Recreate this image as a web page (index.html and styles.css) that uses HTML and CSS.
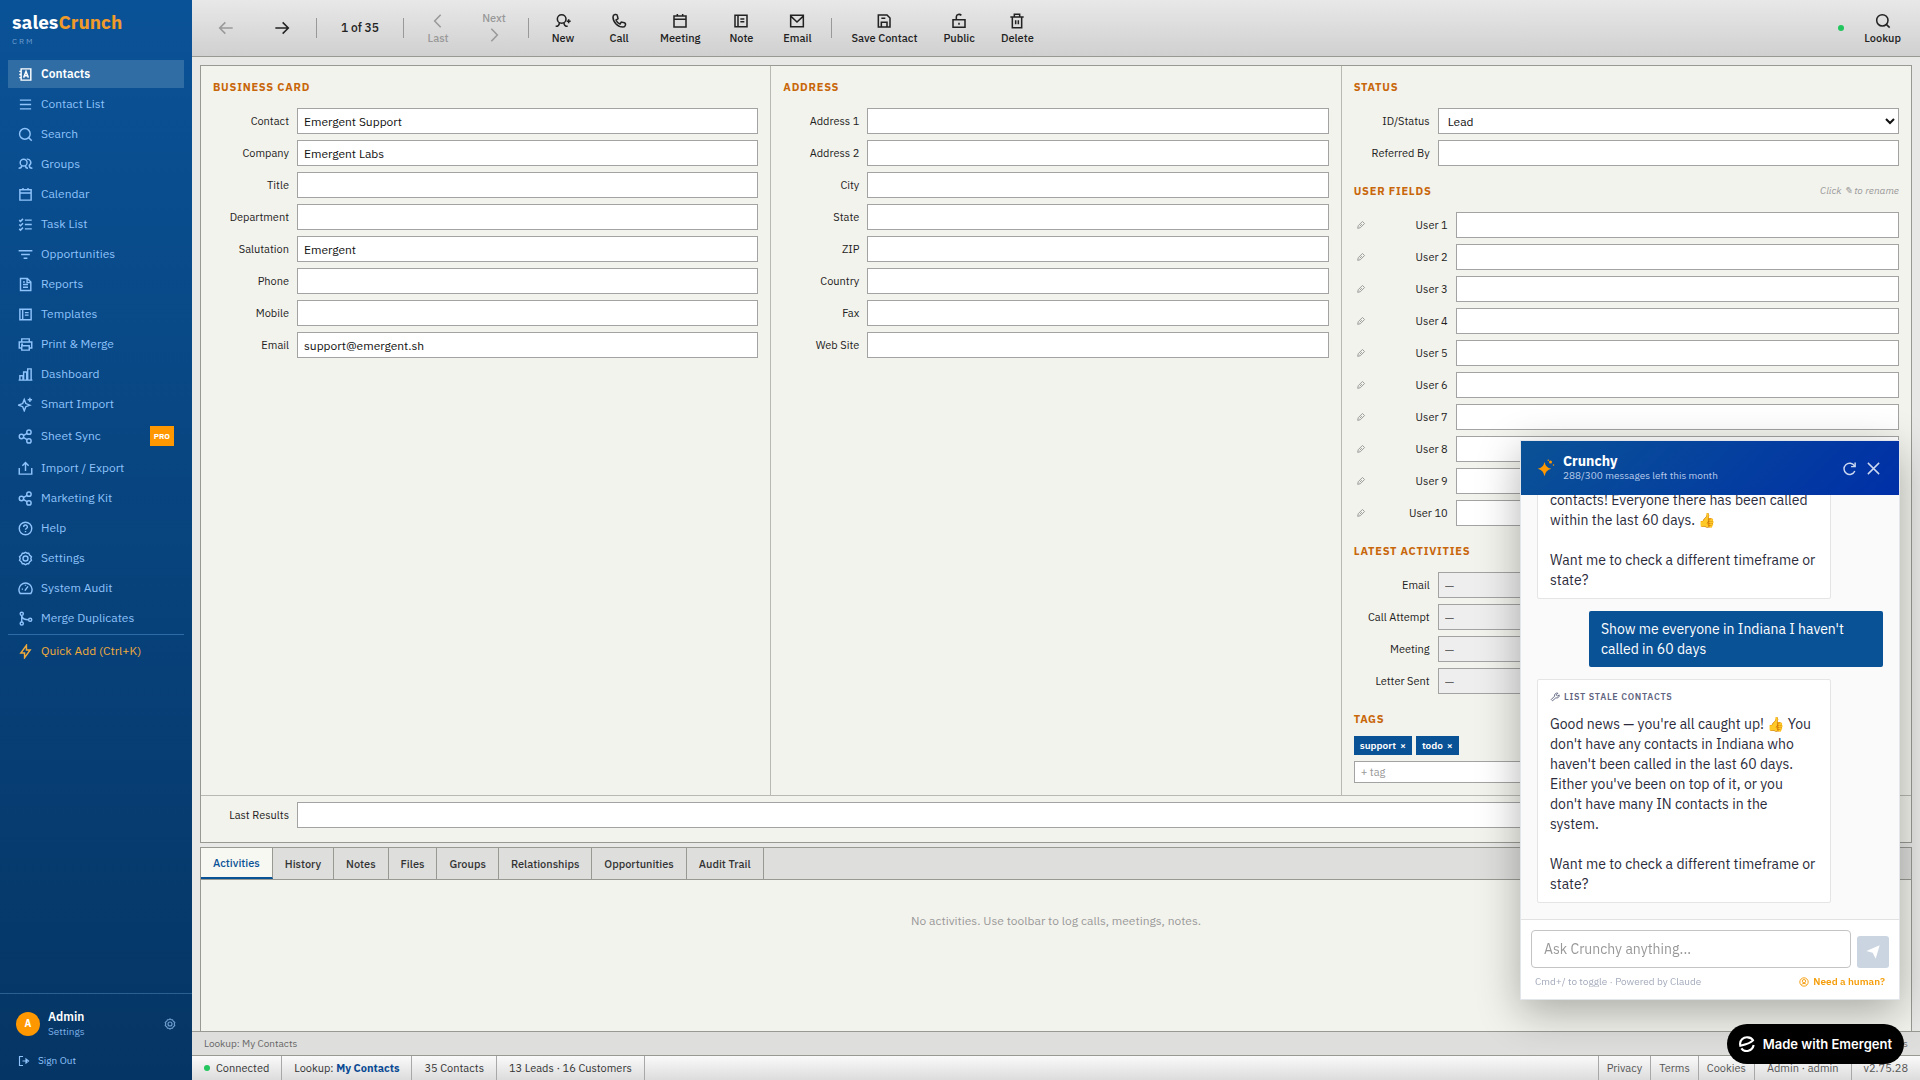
FILE: index.html
```html
<!DOCTYPE html>
<html lang="en">
<head>
<meta charset="utf-8">
<meta name="viewport" content="width=device-width, initial-scale=1">
<title>salesCrunch CRM</title>
<link rel="stylesheet" href="styles.css">
</head>
<body>
<svg class="sprite" aria-hidden="true">
  <symbol id="i-contacts" viewBox="0 0 24 24"><path d="M5 3h15.500v18H5zM2 7h4M2 12h4M2 17h4"/><path d="M9 17l3.800-10 3.800 10M10.500 14h4.600"/></symbol>
  <symbol id="i-menu" viewBox="0 0 24 24"><path d="M3 5h18M3 12h18M3 19h18"/></symbol>
  <symbol id="i-search" viewBox="0 0 24 24"><circle cx="11" cy="11" r="8.500"/><path d="M17 17l5 5"/></symbol>
  <symbol id="i-groups" viewBox="0 0 24 24"><circle cx="9" cy="9" r="5.500"/><path d="M6 13.500c0 3-2 4.500-5 4.500M12 13.500c0 3 1 4.500 4 4.500M14 3.500a5.500 5.500 0 0 1 4 10c0 3 2 4.500 5 4.500"/></symbol>
  <symbol id="i-calendar" viewBox="0 0 24 24"><path d="M3 4.500h18V21H3zM3 9.500h18M8 1.500v4M16 1.500v4"/></symbol>
  <symbol id="i-tasks" viewBox="0 0 24 24"><path d="M11 5h11M11 12h11M11 19h11M2 5l2 2 4-4M2 12l2 2 4-4M2 19l2 2 4-4"/></symbol>
  <symbol id="i-filter" viewBox="0 0 24 24"><path d="M1 6h22M5 12h14M9 18h6"/></symbol>
  <symbol id="i-report" viewBox="0 0 24 24"><path d="M4 2.500h11l5.500 5.500v13.500H4zM14.500 3v6h6M8 12h8M8 16.500h8M8 8h3"/></symbol>
  <symbol id="i-note" viewBox="0 0 24 24"><path d="M3 3.500h18v17H3zM7.500 3.500v17M11 9h6M11 13h6"/></symbol>
  <symbol id="i-print" viewBox="0 0 24 24"><path d="M6 8V3h12v5M6 17.500H2V8h20v9.500h-4M6 14h12v7H6zM5 11.500h3"/></symbol>
  <symbol id="i-chart" viewBox="0 0 24 24"><path d="M1 21h22M3 21v-7h5v7M9 21V8h5v13M15.500 21V3H21v18"/></symbol>
  <symbol id="i-spark" viewBox="0 0 24 24"><path d="M10 4l2.500 6.500L19 13l-6.500 2.500L10 22l-2.500-6.500L1 13l6.500-2.500zM19 1v7M15.500 4.500h7"/></symbol>
  <symbol id="i-share" viewBox="0 0 24 24"><circle cx="5.500" cy="12" r="3.500"/><circle cx="17.500" cy="5" r="3.500"/><circle cx="17.500" cy="19" r="3.500"/><path d="M8.500 10.500l6-3.500M8.500 13.500l6 3.500"/></symbol>
  <symbol id="i-upload" viewBox="0 0 24 24"><path d="M2 11v10h20V11M12 16V3M7 7.500L12 2.500l5 5"/></symbol>
  <symbol id="i-help" viewBox="0 0 24 24"><circle cx="12" cy="12" r="10"/><path d="M9 9.500a3 3 0 1 1 4.500 2.500c-1 .6-1.500 1-1.500 2M12 16v2"/></symbol>
  <symbol id="i-gear" viewBox="0 0 24 24"><path d="M7 3.500h2.500L12 2l2.500 1.500H17l1.500 3 3 2.500-1 3 1 3-3 2.500-1.500 3h-2.500L12 22l-2.500-1.500H7l-1.500-3L2.500 15l1-3-1-3 3-2.500z"/><circle cx="12" cy="12" r="4"/></symbol>
  <symbol id="i-gauge" viewBox="0 0 24 24"><path d="M3.500 20a10.500 10.500 0 1 1 17 0zM11 15.500l5-7M6 13h2M12 6v1.500"/></symbol>
  <symbol id="i-merge" viewBox="0 0 24 24"><circle cx="6" cy="4.500" r="2.500"/><circle cx="6" cy="20" r="2.500"/><circle cx="19.500" cy="14" r="2.500"/><path d="M6 7v10.500M6 8c1 4 5 6 11 6"/></symbol>
  <symbol id="i-bolt" viewBox="0 0 24 24"><path d="M13.500 2v7.500H19.500L10.500 22v-7.500H4.500z"/></symbol>
  <symbol id="i-signout" viewBox="0 0 24 24"><path d="M10 3H3v18h7M9 12h9M16 8l5 4-5 4z"/></symbol>
  <symbol id="i-left" viewBox="0 0 24 24"><path d="M22 12H3M11 3.500L2.500 12l8.500 8.500"/></symbol>
  <symbol id="i-right" viewBox="0 0 24 24"><path d="M2 12h19M13 3.500l8.500 8.500-8.500 8.500"/></symbol>
  <symbol id="i-chevl" viewBox="0 0 24 24"><path d="M16 2.500L7 12l9 9.500"/></symbol>
  <symbol id="i-chevr" viewBox="0 0 24 24"><path d="M8 2.500l9 9.500-9 9.500"/></symbol>
  <symbol id="i-useradd" viewBox="0 0 24 24"><circle cx="10" cy="9" r="6.500"/><path d="M6.500 14.500c0 3-2 5.500-5.500 5.500M13.500 14.500c0 3 2 5.500 5.500 5.500M17.500 12.500h6M20.500 9.500v6"/></symbol>
  <symbol id="i-phone" viewBox="0 0 24 24"><path d="M3 6c0-4 6-5 6.500-2l1 4.500-3 2c1 3 3 5 6 6l2-3 4.500 1c3 1 2 6.500-2 6.500C10 21 3 14 3 6z"/></symbol>
  <symbol id="i-mail" viewBox="0 0 24 24"><path d="M2.500 3.500h19v17h-19zM3 5l9 8.500L21 5"/></symbol>
  <symbol id="i-save" viewBox="0 0 24 24"><path d="M3.500 3h13l4.500 4.500V21H3.500zM8 21v-7h8.500v7M8 8h6"/></symbol>
  <symbol id="i-unlock" viewBox="0 0 24 24"><path d="M3 10h18v11.500H3zM8 10V5.500c0-3.500 5-4.500 7.500-2M12 14.500v3"/></symbol>
  <symbol id="i-trash" viewBox="0 0 24 24"><path d="M2 6h20M5 6v16h14V6M8 6V2h8v4M10 11v6M14 11v6"/></symbol>
  <symbol id="i-pencil" viewBox="0 0 24 24"><path d="M4 20l1.500-6.500L15.500 3.500l5 5L10.500 18.500zM9 15l5-5"/></symbol>
  <symbol id="i-refresh" viewBox="0 0 24 24"><path d="M20 8a9 9 0 1 0 .5 8M21 2.500V9h-6.500"/></symbol>
  <symbol id="i-close" viewBox="0 0 24 24"><path d="M3 3l18 18M21 3L3 21"/></symbol>
  <symbol id="i-wrench" viewBox="0 0 24 24"><path d="M3 18l8-8a6 6 0 0 1 8-7l-4 4 3 3 4-3a6 6 0 0 1-8 7l-8 7z"/></symbol>
  <symbol id="i-support" viewBox="0 0 24 24"><circle cx="12" cy="12" r="10"/><circle cx="12" cy="10" r="4"/><path d="M6 18.500c2-4 10-4 12 0"/></symbol>
</svg>

<div class="app">
  <aside class="sidebar">
    <header class="brand">
      <div class="brand-name">sales<span>Crunch</span></div>
      <div class="brand-sub">CRM</div>
    </header>
    <nav class="nav">
      <a href="#contacts" class="nav-item is-active"><svg class="icon"><use href="#i-contacts"/></svg>Contacts</a>
      <a href="#list" class="nav-item"><svg class="icon"><use href="#i-menu"/></svg>Contact List</a>
      <a href="#search" class="nav-item"><svg class="icon"><use href="#i-search"/></svg>Search</a>
      <a href="#groups" class="nav-item"><svg class="icon"><use href="#i-groups"/></svg>Groups</a>
      <a href="#calendar" class="nav-item"><svg class="icon"><use href="#i-calendar"/></svg>Calendar</a>
      <a href="#tasks" class="nav-item"><svg class="icon"><use href="#i-tasks"/></svg>Task List</a>
      <a href="#opportunities" class="nav-item"><svg class="icon"><use href="#i-filter"/></svg>Opportunities</a>
      <a href="#reports" class="nav-item"><svg class="icon"><use href="#i-report"/></svg>Reports</a>
      <a href="#templates" class="nav-item"><svg class="icon"><use href="#i-note"/></svg>Templates</a>
      <a href="#print" class="nav-item"><svg class="icon"><use href="#i-print"/></svg>Print &amp; Merge</a>
      <a href="#dashboard" class="nav-item"><svg class="icon"><use href="#i-chart"/></svg>Dashboard</a>
      <a href="#smart-import" class="nav-item"><svg class="icon"><use href="#i-spark"/></svg>Smart Import</a>
      <a href="#sheet-sync" class="nav-item nav-item-tall"><svg class="icon"><use href="#i-share"/></svg>Sheet Sync<span class="pro">PRO</span></a>
      <a href="#import" class="nav-item"><svg class="icon"><use href="#i-upload"/></svg>Import / Export</a>
      <a href="#marketing" class="nav-item"><svg class="icon"><use href="#i-share"/></svg>Marketing Kit</a>
      <a href="#help" class="nav-item"><svg class="icon"><use href="#i-help"/></svg>Help</a>
      <a href="#settings" class="nav-item"><svg class="icon"><use href="#i-gear"/></svg>Settings</a>
      <a href="#audit" class="nav-item"><svg class="icon"><use href="#i-gauge"/></svg>System Audit</a>
      <a href="#merge" class="nav-item"><svg class="icon"><use href="#i-merge"/></svg>Merge Duplicates</a>
    </nav>
    <div class="quick">
      <button type="button" class="nav-item quick-add"><svg class="icon"><use href="#i-bolt"/></svg>Quick Add (Ctrl+K)</button>
    </div>
    <footer class="account">
      <a href="#account" class="profile">
        <span class="avatar">A</span>
        <span class="profile-text"><strong>Admin</strong><small>Settings</small></span>
        <svg class="icon icon-sm"><use href="#i-gear"/></svg>
      </a>
      <button type="button" class="signout"><svg class="icon icon-sm"><use href="#i-signout"/></svg>Sign Out</button>
    </footer>
  </aside>

  <div class="main">
    <div class="toolbar">
      <button type="button" class="tool tool-nav" disabled aria-label="Back"><svg class="icon"><use href="#i-left"/></svg></button>
      <button type="button" class="tool tool-nav" aria-label="Forward"><svg class="icon"><use href="#i-right"/></svg></button>
      <span class="sep"></span>
      <span class="counter">1 of 35</span>
      <span class="sep"></span>
      <button type="button" class="tool" disabled><svg class="icon"><use href="#i-chevl"/></svg>Last</button>
      <button type="button" class="tool tool-next" disabled>Next<svg class="icon"><use href="#i-chevr"/></svg></button>
      <span class="sep"></span>
      <button type="button" class="tool"><svg class="icon"><use href="#i-useradd"/></svg>New</button>
      <button type="button" class="tool"><svg class="icon"><use href="#i-phone"/></svg>Call</button>
      <button type="button" class="tool"><svg class="icon"><use href="#i-calendar"/></svg>Meeting</button>
      <button type="button" class="tool"><svg class="icon"><use href="#i-note"/></svg>Note</button>
      <button type="button" class="tool"><svg class="icon"><use href="#i-mail"/></svg>Email</button>
      <span class="sep"></span>
      <button type="button" class="tool"><svg class="icon"><use href="#i-save"/></svg>Save Contact</button>
      <button type="button" class="tool"><svg class="icon"><use href="#i-unlock"/></svg>Public</button>
      <button type="button" class="tool"><svg class="icon"><use href="#i-trash"/></svg>Delete</button>
      <span class="spacer"></span>
      <span class="dot"></span>
      <button type="button" class="tool"><svg class="icon"><use href="#i-search"/></svg>Lookup</button>
    </div>

    <div class="workspace">
      <form class="panel">
        <div class="columns">
          <section class="column">
            <div class="group">
              <h2 class="title">Business Card</h2>
              <div class="field"><label for="f-contact">Contact</label><input id="f-contact" type="text" value="Emergent Support"></div>
              <div class="field"><label for="f-company">Company</label><input id="f-company" type="text" value="Emergent Labs"></div>
              <div class="field"><label for="f-title">Title</label><input id="f-title" type="text"></div>
              <div class="field"><label for="f-department">Department</label><input id="f-department" type="text"></div>
              <div class="field"><label for="f-salutation">Salutation</label><input id="f-salutation" type="text" value="Emergent"></div>
              <div class="field"><label for="f-phone">Phone</label><input id="f-phone" type="text"></div>
              <div class="field"><label for="f-mobile">Mobile</label><input id="f-mobile" type="text"></div>
              <div class="field"><label for="f-email">Email</label><input id="f-email" type="text" value="support@emergent.sh"></div>
            </div>
          </section>
          <section class="column">
            <div class="group">
              <h2 class="title">Address</h2>
              <div class="field"><label for="f-address1">Address 1</label><input id="f-address1" type="text"></div>
              <div class="field"><label for="f-address2">Address 2</label><input id="f-address2" type="text"></div>
              <div class="field"><label for="f-city">City</label><input id="f-city" type="text"></div>
              <div class="field"><label for="f-state">State</label><input id="f-state" type="text"></div>
              <div class="field"><label for="f-zip">ZIP</label><input id="f-zip" type="text"></div>
              <div class="field"><label for="f-country">Country</label><input id="f-country" type="text"></div>
              <div class="field"><label for="f-fax">Fax</label><input id="f-fax" type="text"></div>
              <div class="field"><label for="f-web">Web Site</label><input id="f-web" type="text"></div>
            </div>
          </section>
          <section class="column">
            <div class="group">
              <h2 class="title">Status</h2>
              <div class="field"><label for="f-status">ID/Status</label><select id="f-status"><option>Lead</option><option>Customer</option></select></div>
              <div class="field"><label for="f-referred">Referred By</label><input id="f-referred" type="text"></div>
            </div>
            <div class="group">
              <h2 class="title">User Fields<em class="hint">Click ✎ to rename</em></h2>
              <div class="field field-user"><button type="button" class="rename" aria-label="Rename User 1"><svg class="icon"><use href="#i-pencil"/></svg></button><label for="u1">User 1</label><input id="u1" type="text"></div>
              <div class="field field-user"><button type="button" class="rename" aria-label="Rename User 2"><svg class="icon"><use href="#i-pencil"/></svg></button><label for="u2">User 2</label><input id="u2" type="text"></div>
              <div class="field field-user"><button type="button" class="rename" aria-label="Rename User 3"><svg class="icon"><use href="#i-pencil"/></svg></button><label for="u3">User 3</label><input id="u3" type="text"></div>
              <div class="field field-user"><button type="button" class="rename" aria-label="Rename User 4"><svg class="icon"><use href="#i-pencil"/></svg></button><label for="u4">User 4</label><input id="u4" type="text"></div>
              <div class="field field-user"><button type="button" class="rename" aria-label="Rename User 5"><svg class="icon"><use href="#i-pencil"/></svg></button><label for="u5">User 5</label><input id="u5" type="text"></div>
              <div class="field field-user"><button type="button" class="rename" aria-label="Rename User 6"><svg class="icon"><use href="#i-pencil"/></svg></button><label for="u6">User 6</label><input id="u6" type="text"></div>
              <div class="field field-user"><button type="button" class="rename" aria-label="Rename User 7"><svg class="icon"><use href="#i-pencil"/></svg></button><label for="u7">User 7</label><input id="u7" type="text"></div>
              <div class="field field-user"><button type="button" class="rename" aria-label="Rename User 8"><svg class="icon"><use href="#i-pencil"/></svg></button><label for="u8">User 8</label><input id="u8" type="text"></div>
              <div class="field field-user"><button type="button" class="rename" aria-label="Rename User 9"><svg class="icon"><use href="#i-pencil"/></svg></button><label for="u9">User 9</label><input id="u9" type="text"></div>
              <div class="field field-user"><button type="button" class="rename" aria-label="Rename User 10"><svg class="icon"><use href="#i-pencil"/></svg></button><label for="u10">User 10</label><input id="u10" type="text"></div>
            </div>
            <div class="group">
              <h2 class="title">Latest Activities</h2>
              <div class="field"><label for="a-email">Email</label><input id="a-email" type="text" value="—" readonly></div>
              <div class="field"><label for="a-call">Call Attempt</label><input id="a-call" type="text" value="—" readonly></div>
              <div class="field"><label for="a-meeting">Meeting</label><input id="a-meeting" type="text" value="—" readonly></div>
              <div class="field"><label for="a-letter">Letter Sent</label><input id="a-letter" type="text" value="—" readonly></div>
            </div>
            <div class="group">
              <h2 class="title title-tight">Tags</h2>
              <div class="tags">
                <span class="tag">support<button type="button" aria-label="Remove support">×</button></span>
                <span class="tag">todo<button type="button" aria-label="Remove todo">×</button></span>
              </div>
              <input class="tag-input" type="text" placeholder="+ tag" aria-label="Add tag">
            </div>
          </section>
        </div>
        <div class="field results"><label for="f-results">Last Results</label><input id="f-results" type="text"></div>
      </form>

      <section class="activity">
        <div class="tabs" role="tablist">
          <button type="button" role="tab" class="tab is-active">Activities</button>
          <button type="button" role="tab" class="tab">History</button>
          <button type="button" role="tab" class="tab">Notes</button>
          <button type="button" role="tab" class="tab">Files</button>
          <button type="button" role="tab" class="tab">Groups</button>
          <button type="button" role="tab" class="tab">Relationships</button>
          <button type="button" role="tab" class="tab">Opportunities</button>
          <button type="button" role="tab" class="tab">Audit Trail</button>
        </div>
        <p class="empty">No activities. Use toolbar to log calls, meetings, notes.</p>
      </section>
    </div>

    <div class="lookup"><span>Lookup: My Contacts</span><span>35 contacts</span></div>
    <footer class="status">
      <span class="cell"><span class="dot"></span>Connected</span>
      <span class="cell">Lookup: <strong>My Contacts</strong></span>
      <span class="cell">35 Contacts</span>
      <span class="cell">13 Leads · 16 Customers</span>
      <span class="spacer"></span>
      <a href="#privacy" class="cell cell-link">Privacy</a>
      <a href="#terms" class="cell cell-link">Terms</a>
      <a href="#cookies" class="cell cell-link">Cookies</a>
      <span class="cell cell-end">Admin · admin</span>
      <span class="cell cell-end">v2.75.28</span>
    </footer>
  </div>
</div>

<section class="chat" aria-label="Crunchy">
  <header class="chat-head">
    <svg class="chat-logo" viewBox="0 0 24 24"><path d="M10 4q1.500 7.500 9 9-7.500 1.500-9 10-1.500-8.500-9-10 7.500-1.500 9-9z"/><circle cx="18" cy="4" r="2"/><circle cx="22" cy="8" r="1"/><circle cx="15" cy="1.500" r="1"/></svg>
    <div class="chat-name"><strong>Crunchy</strong><small>288/300 messages left this month</small></div>
    <button type="button" aria-label="Restart"><svg class="icon"><use href="#i-refresh"/></svg></button>
    <button type="button" aria-label="Close"><svg class="icon"><use href="#i-close"/></svg></button>
  </header>
  <div class="chat-body">
    <div class="bubble">
      <p>contacts! Everyone there has been called within the last 60 days. 👍</p>
      <p>Want me to check a different timeframe or state?</p>
    </div>
    <div class="bubble bubble-user"><p>Show me everyone in Indiana I haven't called in 60 days</p></div>
    <div class="bubble">
      <div class="action"><svg class="icon"><use href="#i-wrench"/></svg>List stale contacts</div>
      <p>Good news — you're all caught up! 👍 You don't have any contacts in Indiana who haven't been called in the last 60 days. Either you've been on top of it, or you don't have many IN contacts in the system.</p>
      <p>Want me to check a different timeframe or state?</p>
    </div>
  </div>
  <footer class="chat-foot">
    <div class="compose">
      <textarea rows="1" placeholder="Ask Crunchy anything..." aria-label="Message"></textarea>
      <button type="button" class="send" aria-label="Send"><svg viewBox="0 0 24 24"><path d="M2 10.500L22 2l-6 20-4.500-9z"/></svg></button>
    </div>
    <div class="chat-meta"><span>Cmd+/ to toggle · Powered by Claude</span><a href="#human"><svg class="icon"><use href="#i-support"/></svg>Need a human?</a></div>
  </footer>
</section>

<a href="#emergent" class="made">
  <svg viewBox="0 0 24 24"><path d="M2 14.500C0 6 7 1.500 13 2c4 .3 7 2.500 8 4.500-2 2.500-10 6-19 8zM3.500 18.500C9 26 20 22.500 22 13.500"/></svg>
  Made with Emergent
</a>
</body>
</html>
```
FILE: styles.css
```css
:root {
  --ui: "IBM Plex Sans", "Noto Sans", sans-serif;
  --blue: #0a5296;
  --orange: #ff9800;
  --line: #999994;
  --paper: #f3f3ed;
}

* { box-sizing: border-box; }

body {
  margin: 0;
  font: 12px/16px var(--ui);
  color: #222;
}

button, input, select, textarea { font: inherit; color: inherit; }
button { background: none; border: 0; padding: 0; }
a { color: inherit; text-decoration: none; }
h2, p { margin: 0; }

.sprite { display: none; }
.icon {
  width: 15px;
  height: 15px;
  flex: none;
  fill: none;
  stroke: currentColor;
  stroke-width: 2.3;
}
.icon-sm { width: 12px; height: 12px; }
.spacer { flex: 1; }

.app { display: flex; height: 100vh; }

/* Sidebar */
.sidebar {
  width: 192px;
  flex: none;
  display: flex;
  flex-direction: column;
  background: linear-gradient(#0a5297, #053564);
  color: #8fc3fb;
}
.brand { padding: 12px; height: 60px; }
.brand-name { font-size: 19px; line-height: 21px; font-weight: 700; color: #fff; }
.brand-name span { color: #f09a2a; }
.brand-sub { font-size: 8px; line-height: 16px; letter-spacing: 2px; color: #6f9fd0; }
.nav { display: flex; flex-direction: column; gap: 2px; padding: 0 8px; }
.nav-item {
  display: flex;
  align-items: center;
  gap: 8px;
  height: 28px;
  padding: 0 10px;
}
.nav-item-tall { height: 32px; }
.nav-item.is-active { background: #306da5; color: #fff; font-weight: 600; }
.pro {
  margin-left: auto;
  padding: 0 4px;
  background: var(--orange);
  color: #fff;
  font-size: 8px;
  line-height: 20px;
  font-weight: 700;
}
.quick { margin: 2px 8px 0; border-top: 1px solid #2e6aa5; padding-top: 2px; }
.quick-add { color: #f0aa3c; }
.account { margin-top: auto; border-top: 1px solid #2a5f94; padding: 16px 16px 11px; }
.profile { display: flex; align-items: center; gap: 8px; height: 28px; }
.profile .icon { margin-left: auto; color: #6f9fd0; }
.avatar {
  width: 24px;
  height: 24px;
  border-radius: 50%;
  background: var(--orange);
  color: #fff;
  font-size: 10px;
  line-height: 24px;
  font-weight: 700;
  text-align: center;
}
.profile-text { display: flex; flex-direction: column; }
.profile-text strong { color: #fff; font-weight: 600; }
.profile-text small { font-size: 10px; line-height: 14px; color: #7fb0e6; }
.signout { display: flex; align-items: center; gap: 8px; margin-top: 15px; padding-left: 2px; font-size: 10px; }

/* Toolbar */
.main { flex: 1; min-width: 0; display: flex; flex-direction: column; background: #e8e8e6; }
.toolbar {
  display: flex;
  align-items: center;
  gap: 6px;
  height: 57px;
  flex: none;
  padding: 0 9px;
  background: linear-gradient(#e8e8e8, #d0d0d0);
  border-bottom: 1px solid var(--line);
}
.tool {
  display: flex;
  flex-direction: column;
  align-items: center;
  gap: 2px;
  min-width: 50px;
  padding: 2px 10px 0;
  font-size: 11px;
  line-height: 14px;
  font-weight: 500;
  color: #222;
}
.tool-nav { padding: 0; }
.tool-next { padding: 0 10px 2px; }
.tool .icon { width: 16px; height: 16px; }
.tool:disabled { color: #999; }
.sep { width: 1px; height: 20px; margin: 0 3px; background: #999; }
.counter { padding: 0 15px; font-weight: 500; }
.dot { width: 6px; height: 6px; border-radius: 50%; background: #22c55e; }
.toolbar .dot { margin-right: 4px; }

/* Contact form */
.workspace { flex: 1; min-height: 0; display: flex; flex-direction: column; gap: 4px; padding: 8px 8px 0; }
.panel { border: 1px solid var(--line); background: var(--paper); flex: none; }
.columns {
  display: grid;
  grid-template-columns: repeat(3, 1fr);
  gap: 1px;
  background: #b9b9b2;
  border-bottom: 1px solid #b9b9b2;
}
.column { display: flex; flex-direction: column; gap: 16px; padding: 12px; background: var(--paper); }
.group { display: flex; flex-direction: column; gap: 6px; }
.title {
  display: flex;
  justify-content: space-between;
  margin-bottom: 6px;
  font-size: 11px;
  line-height: 18px;
  font-weight: 700;
  letter-spacing: 0.07em;
  text-transform: uppercase;
  color: #c8660a;
}
.title-tight { margin-bottom: 2px; }
.hint { font-size: 10px; font-weight: 400; letter-spacing: 0; text-transform: none; color: #999; }
.field { display: flex; align-items: center; gap: 8px; }
.field label { width: 76px; flex: none; font-size: 11px; text-align: right; white-space: nowrap; }
.field input, .field select {
  flex: 1;
  min-width: 0;
  height: 26px;
  padding: 0 6px;
  border: 1px solid #a3a3a3;
  border-radius: 0;
  background: #fff;
  color: #111;
}
.field select { padding: 0 5px; }
.field input[readonly] { background: #eee; color: #666; }
.field-user { gap: 6px; }
.field-user label { width: 74px; margin-right: 2px; }
.rename { width: 14px; display: flex; justify-content: center; color: #999; }
.rename .icon { width: 10px; height: 10px; }
.tags { display: flex; gap: 4px; }
.tag { display: flex; gap: 4px; padding: 0 6px; background: var(--blue); color: #fff; font-size: 10px; line-height: 19px; font-weight: 600; }
.tag-input { height: 22px; padding: 0 6px; border: 1px solid #a3a3a3; background: #fff; font-size: 11px; }
.tag-input::placeholder { color: #999; }
.results { padding: 6px 12px 14px; }

/* Activity tabs */
.activity { flex: 1; min-height: 0; background: var(--paper); border: 1px solid var(--line); border-bottom: 0; }
.tabs { display: flex; height: 32px; background: #dededd; border-bottom: 1px solid var(--line); }
.tab { padding: 0 12px; border-right: 1px solid var(--line); font-size: 11px; font-weight: 500; color: #333; }
.tab.is-active { background: #f8f8f2; color: var(--blue); border-bottom: 2px solid var(--blue); }
.empty { padding: 32px 12px; text-align: center; line-height: 18px; color: #999; }

.lookup {
  display: flex;
  justify-content: space-between;
  flex: none;
  padding: 0 12px;
  border-top: 1px solid var(--line);
  background: #dededc;
  font-size: 10px;
  line-height: 23px;
  color: #666;
}
.status {
  display: flex;
  flex: none;
  height: 25px;
  border-top: 1px solid var(--line);
  background: linear-gradient(#fafafa, #dcdcdc);
  font-size: 11px;
  line-height: 24px;
  color: #333;
}
.cell { padding: 0 12px; border-right: 1px solid #a8a8a8; white-space: pre; }
.cell strong { color: #0a4a94; }
.cell .dot { display: inline-block; margin-right: 6px; vertical-align: 1px; }
.cell-link, .cell-end { border-right: 0; border-left: 1px solid #a8a8a8; color: #555; }
.cell-link { padding: 0 8px; }

/* Assistant window floating over the page */
.chat {
  position: fixed;
  right: 20px;
  bottom: 80px;
  width: 380px;
  height: 560px;
  display: flex;
  flex-direction: column;
  border: 1px solid #e2e5ea;
  background: #fff;
  box-shadow: 0 12px 40px rgba(0, 0, 0, 0.3);
}
.chat-head {
  display: flex;
  align-items: center;
  height: 54px;
  flex: none;
  padding: 0 14px 0 16px;
  background: linear-gradient(135deg, #0a5296, #002fa7);
  color: #fff;
}
.chat-logo { width: 18px; height: 18px; margin-right: 8px; fill: var(--orange); }
.chat-name { flex: 1; display: flex; flex-direction: column; }
.chat-name strong { font-size: 14px; }
.chat-name small { font-size: 10px; line-height: 14px; color: #b9cbea; }
.chat-head button { width: 24px; display: flex; justify-content: center; color: #cbd8f0; }
.chat-body {
  flex: 1;
  min-height: 0;
  overflow: hidden;
  display: flex;
  flex-direction: column;
  justify-content: flex-end;
  gap: 12px;
  padding: 16px;
  background: #fafafa;
}
.bubble {
  width: 85%;
  flex: none;
  display: flex;
  flex-direction: column;
  gap: 20px;
  padding: 8px 12px;
  border: 1px solid #e5e5e5;
  border-radius: 2px;
  background: #fff;
  font-size: 14px;
  line-height: 20px;
  color: #2b2b3b;
}
.bubble-user { align-self: flex-end; border: 0; background: var(--blue); color: #fff; }
.action {
  display: flex;
  align-items: center;
  gap: 4px;
  margin-bottom: -12px;
  font-size: 9px;
  line-height: 18px;
  font-weight: 600;
  letter-spacing: 0.08em;
  text-transform: uppercase;
  color: #5f6580;
}
.action .icon { width: 10px; height: 10px; }
.chat-foot { border-top: 1px solid #e2e2e2; padding: 10px; height: 80px; flex: none; }
.compose { display: flex; align-items: flex-end; gap: 6px; }
.compose textarea {
  flex: 1;
  height: 38px;
  padding: 8px 12px;
  border: 1px solid #c4c4c4;
  border-radius: 4px;
  resize: none;
  font-size: 14px;
  line-height: 20px;
}
.compose textarea::placeholder { color: #999; }
.send { width: 32px; height: 32px; border-radius: 3px; background: #cbd5e1; display: grid; place-items: center; }
.send svg { width: 16px; height: 16px; fill: #fff; }
.chat-meta { display: flex; justify-content: space-between; padding: 6px 4px 0; font-size: 10px; color: #a3aabb; }
.chat-meta a { display: flex; align-items: center; gap: 4px; color: #f59e0b; font-weight: 600; }
.chat-meta .icon { width: 10px; height: 10px; }

.made {
  position: fixed;
  right: 16px;
  bottom: 16px;
  display: flex;
  align-items: center;
  gap: 8px;
  height: 40px;
  padding: 0 12px;
  border-radius: 20px;
  background: #000;
  color: #fff;
  font: 600 13px/20px Inter, sans-serif;
}
.made svg { width: 16px; height: 16px; fill: none; stroke: #fff; stroke-width: 3.2; }
```
